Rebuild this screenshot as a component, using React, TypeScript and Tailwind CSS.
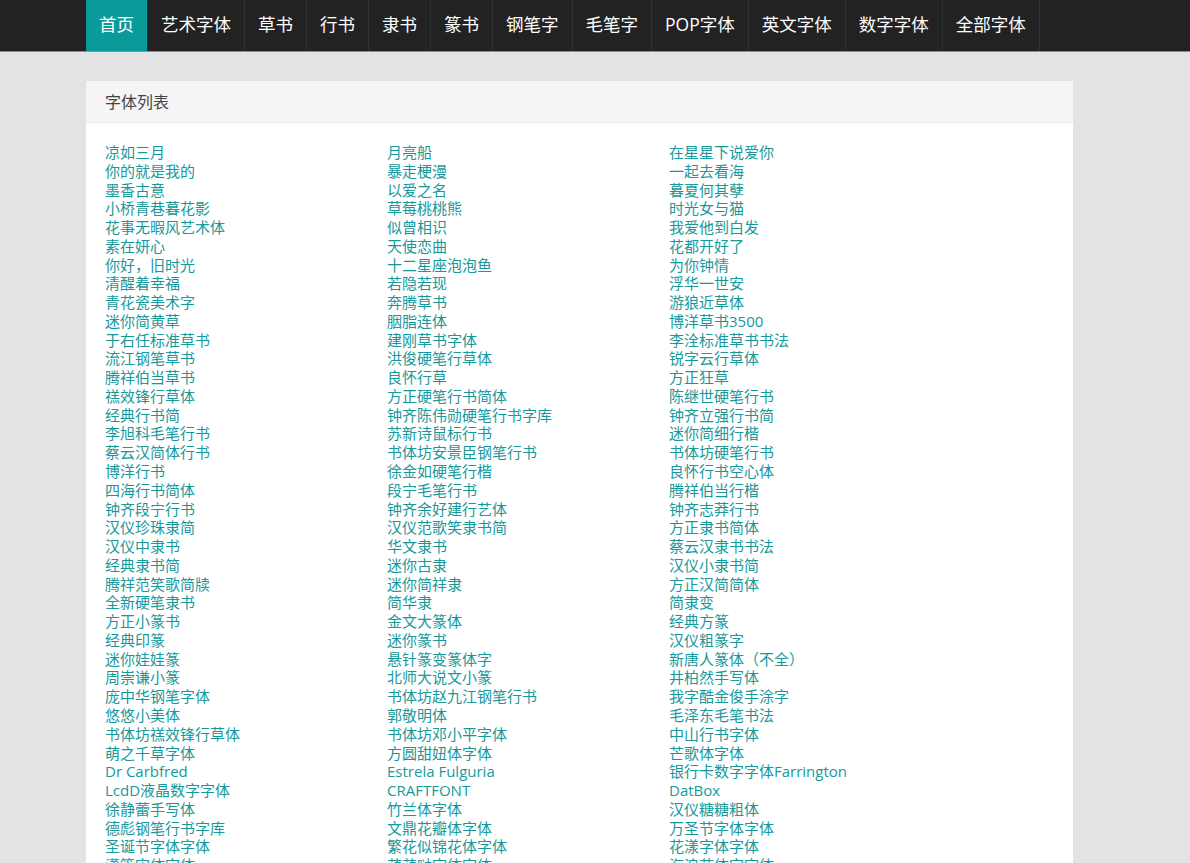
import React from "react";

const nav = ["首页", "艺术字体", "草书", "行书", "隶书", "篆书", "钢笔字", "毛笔字", "POP字体", "英文字体", "数字字体", "全部字体"];

const col1 = ["凉如三月", "你的就是我的", "墨香古意", "小桥青巷暮花影", "花事无暇风艺术体", "素在妍心", "你好，旧时光", "清醒着幸福", "青花瓷美术字", "迷你简黄草", "于右任标准草书", "流江钢笔草书", "腾祥伯当草书", "禚效锋行草体", "经典行书简", "李旭科毛笔行书", "蔡云汉简体行书", "博洋行书", "四海行书简体", "钟齐段宁行书", "汉仪珍珠隶简", "汉仪中隶书", "经典隶书简", "腾祥范笑歌简牍", "全新硬笔隶书", "方正小篆书", "经典印篆", "迷你娃娃篆", "周崇谦小篆", "庞中华钢笔字体", "悠悠小美体", "书体坊禚效锋行草体", "萌之千草字体", "Dr Carbfred", "LcdD液晶数字字体", "徐静蕾手写体", "德彪钢笔行书字库", "圣诞节字体字体", "潇篇宋体字体"];
const col2 = ["月亮船", "暴走梗漫", "以爱之名", "草莓桃桃熊", "似曾相识", "天使恋曲", "十二星座泡泡鱼", "若隐若现", "奔腾草书", "胭脂连体", "建刚草书字体", "洪俊硬笔行草体", "良怀行草", "方正硬笔行书简体", "钟齐陈伟勋硬笔行书字库", "苏新诗鼠标行书", "书体坊安景臣钢笔行书", "徐金如硬笔行楷", "段宁毛笔行书", "钟齐余好建行艺体", "汉仪范歌笑隶书简", "华文隶书", "迷你古隶", "迷你简祥隶", "简华隶", "金文大篆体", "迷你篆书", "悬针篆变篆体字", "北师大说文小篆", "书体坊赵九江钢笔行书", "郭敬明体", "书体坊邓小平字体", "方圆甜妞体字体", "Estrela Fulguria", "CRAFTFONT", "竹兰体字体", "文鼎花瓣体字体", "繁花似锦花体字体", "萌萌哒字体字体"];
const col3 = ["在星星下说爱你", "一起去看海", "暮夏何其孽", "时光女与猫", "我爱他到白发", "花都开好了", "为你钟情", "浮华一世安", "游狼近草体", "博洋草书3500", "李洤标准草书书法", "锐字云行草体", "方正狂草", "陈继世硬笔行书", "钟齐立强行书简", "迷你简细行楷", "书体坊硬笔行书", "良怀行书空心体", "腾祥伯当行楷", "钟齐志莽行书", "方正隶书简体", "蔡云汉隶书书法", "汉仪小隶书简", "方正汉简简体", "简隶变", "经典方篆", "汉仪粗篆字", "新唐人篆体（不全）", "井柏然手写体", "我字酷金俊手涂字", "毛泽东毛笔书法", "中山行书字体", "芒歌体字体", "银行卡数字字体Farrington", "DatBox", "汉仪糖糖粗体", "万圣节字体字体", "花漾字体字体", "海浪花体字字体"];

function Col({ items }: { items: string[] }) {
  return (
    <ul className="flex flex-col">
      {items.map((t, i) => (
        <li key={i} className="leading-[18.78px] h-[18.78px] whitespace-nowrap">
          <a href="#" className="text-[#17999b] text-[15px] no-underline">{t}</a>
        </li>
      ))}
    </ul>
  );
}

export default function App() {
  return (
    <div
      className="min-h-screen bg-[#e3e3e3]"
      style={{ fontFamily: '"Open Sans", "Noto Sans CJK SC", "Noto Sans", sans-serif' }}
    >
      <header className="bg-[#222222] border-b border-[#8c8c8c] h-[52px]">
        <nav className="ml-[86px] flex h-[51px]">
          {nav.map((n, i) => (
            <a
              key={n}
              href="#"
              className={
                i === 0
                  ? "flex items-center pb-[3px] px-[13px] text-[17.5px] text-white bg-[#0b9a9a] border-r border-[#2c2c2c]"
                  : "flex items-center pb-[3px] px-[13px] text-[17.5px] text-white border-r border-[#2f2f2f]"
              }
            >
              {n}
            </a>
          ))}
        </nav>
      </header>
      <main className="pt-[29px] ml-[86px] w-[987px]">
        <section className="bg-white">
          <div className="h-[42px] bg-[#f5f5f5] border-b border-[#eaeaea] flex items-center px-[19px] text-[16px] text-[#444]">
            字体列表
          </div>
          <div className="grid grid-cols-[282px_282px_282px] px-[19px] pt-[20px] pb-[20px]">
            <Col items={col1} />
            <Col items={col2} />
            <Col items={col3} />
          </div>
        </section>
      </main>
    </div>
  );
}
